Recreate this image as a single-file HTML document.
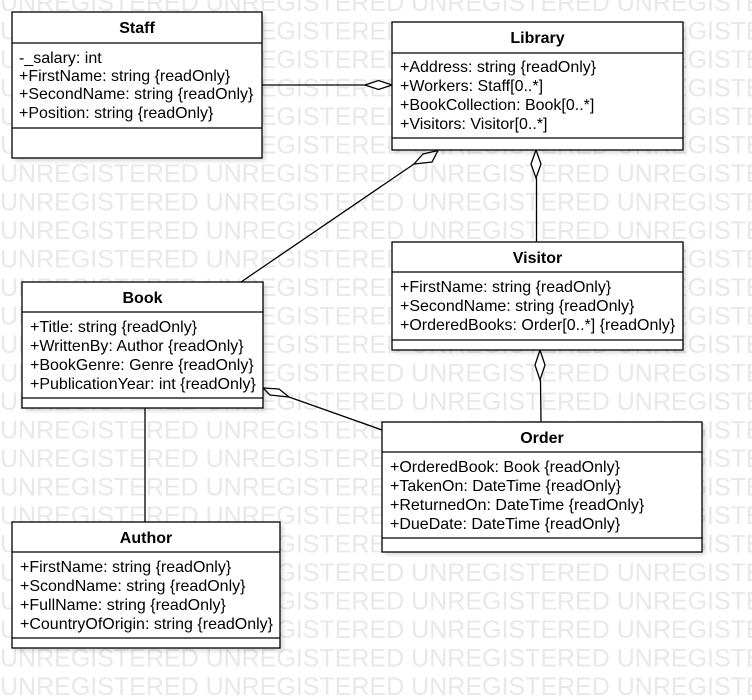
<!DOCTYPE html>
<html><head><meta charset="utf-8"><style>
html,body{margin:0;padding:0;background:#fff;}
svg{display:block}
</style></head><body>
<svg width="752" height="700" viewBox="0 0 752 700" xmlns="http://www.w3.org/2000/svg" font-family="Liberation Sans, sans-serif">
<defs>
<filter id="sh" x="-5%" y="-5%" width="115%" height="120%"><feGaussianBlur stdDeviation="2"/></filter>
</defs>
<g fill="#e8e8e8" font-size="25">
<text x="0" y="11">UNREGISTERED UNREGISTERED UNREGISTERED UNREGISTERED</text>
<text x="0" y="39.5">UNREGISTERED UNREGISTERED UNREGISTERED UNREGISTERED</text>
<text x="0" y="68">UNREGISTERED UNREGISTERED UNREGISTERED UNREGISTERED</text>
<text x="0" y="96.5">UNREGISTERED UNREGISTERED UNREGISTERED UNREGISTERED</text>
<text x="0" y="125">UNREGISTERED UNREGISTERED UNREGISTERED UNREGISTERED</text>
<text x="0" y="153.5">UNREGISTERED UNREGISTERED UNREGISTERED UNREGISTERED</text>
<text x="0" y="182">UNREGISTERED UNREGISTERED UNREGISTERED UNREGISTERED</text>
<text x="0" y="210.5">UNREGISTERED UNREGISTERED UNREGISTERED UNREGISTERED</text>
<text x="0" y="239">UNREGISTERED UNREGISTERED UNREGISTERED UNREGISTERED</text>
<text x="0" y="267.5">UNREGISTERED UNREGISTERED UNREGISTERED UNREGISTERED</text>
<text x="0" y="296">UNREGISTERED UNREGISTERED UNREGISTERED UNREGISTERED</text>
<text x="0" y="324.5">UNREGISTERED UNREGISTERED UNREGISTERED UNREGISTERED</text>
<text x="0" y="353">UNREGISTERED UNREGISTERED UNREGISTERED UNREGISTERED</text>
<text x="0" y="381.5">UNREGISTERED UNREGISTERED UNREGISTERED UNREGISTERED</text>
<text x="0" y="410">UNREGISTERED UNREGISTERED UNREGISTERED UNREGISTERED</text>
<text x="0" y="438.5">UNREGISTERED UNREGISTERED UNREGISTERED UNREGISTERED</text>
<text x="0" y="467">UNREGISTERED UNREGISTERED UNREGISTERED UNREGISTERED</text>
<text x="0" y="495.5">UNREGISTERED UNREGISTERED UNREGISTERED UNREGISTERED</text>
<text x="0" y="524">UNREGISTERED UNREGISTERED UNREGISTERED UNREGISTERED</text>
<text x="0" y="552.5">UNREGISTERED UNREGISTERED UNREGISTERED UNREGISTERED</text>
<text x="0" y="581">UNREGISTERED UNREGISTERED UNREGISTERED UNREGISTERED</text>
<text x="0" y="609.5">UNREGISTERED UNREGISTERED UNREGISTERED UNREGISTERED</text>
<text x="0" y="638">UNREGISTERED UNREGISTERED UNREGISTERED UNREGISTERED</text>
<text x="0" y="666.5">UNREGISTERED UNREGISTERED UNREGISTERED UNREGISTERED</text>
<text x="0" y="695">UNREGISTERED UNREGISTERED UNREGISTERED UNREGISTERED</text>
</g>

<g stroke="#000" stroke-width="1.3" fill="#fff">
<line x1="262" y1="85" x2="365" y2="85"/>
<path d="M392 85 L378.5 80.5 L365 85 L378.5 89.5 Z"/>
<line x1="414" y1="164" x2="241" y2="282"/>
<path d="M438 150.5 L423 154 L414 164 L432 162 Z"/>
<line x1="536.5" y1="178" x2="536.5" y2="242"/>
<path d="M536 150 L531 164 L536 178 L541 164 Z"/>
<line x1="289" y1="397" x2="382" y2="430"/>
<path d="M263 388 L270 395 L289 397 L279 389 Z"/>
<line x1="540.5" y1="380" x2="541" y2="422"/>
<path d="M540 350 L535 365 L540 380 L545 365 Z"/>
<line x1="145" y1="408" x2="145" y2="522"/>
</g>

<g fill="#000" opacity="0.15" filter="url(#sh)">
<rect x="15" y="15" width="250" height="146"/>
<rect x="395" y="25" width="291" height="128"/>
<rect x="395" y="245" width="291" height="108"/>
<rect x="25" y="285" width="241" height="126"/>
<rect x="385" y="425" width="320" height="130"/>
<rect x="15" y="525" width="268" height="126"/>
</g>

<g stroke="#000" stroke-width="1.3" fill="#fff">
<rect x="12" y="12" width="250" height="146"/>
<line x1="12" y1="43" x2="262" y2="43"/><line x1="12" y1="128" x2="262" y2="128"/>
<rect x="392" y="22" width="291" height="128"/>
<line x1="392" y1="53" x2="683" y2="53"/><line x1="392" y1="138" x2="683" y2="138"/>
<rect x="392" y="242" width="291" height="108"/>
<line x1="392" y1="272" x2="683" y2="272"/><line x1="392" y1="340" x2="683" y2="340"/>
<rect x="22" y="282" width="241" height="126"/>
<line x1="22" y1="312" x2="263" y2="312"/><line x1="22" y1="398" x2="263" y2="398"/>
<rect x="382" y="422" width="320" height="130"/>
<line x1="382" y1="452" x2="702" y2="452"/><line x1="382" y1="538" x2="702" y2="538"/>
<rect x="12" y="522" width="268" height="126"/>
<line x1="12" y1="552" x2="280" y2="552"/><line x1="12" y1="638" x2="280" y2="638"/>
</g>

<g fill="#000" font-size="16" font-weight="bold" text-anchor="middle">
<text x="137" y="33">Staff</text>
<text x="537.5" y="43">Library</text>
<text x="537.5" y="263">Visitor</text>
<text x="142.5" y="303">Book</text>
<text x="542" y="443">Order</text>
<text x="146" y="543">Author</text>
</g>
<g fill="#000" font-size="16">
<text x="19" y="63">-_salary: int</text>
<text x="19" y="81">+FirstName: string {readOnly}</text>
<text x="19" y="99">+SecondName: string {readOnly}</text>
<text x="19" y="118">+Position: string {readOnly}</text>

<text x="400" y="72">+Address: string {readOnly}</text>
<text x="400" y="91">+Workers: Staff[0..*]</text>
<text x="400" y="110">+BookCollection: Book[0..*]</text>
<text x="400" y="129">+Visitors: Visitor[0..*]</text>

<text x="400" y="292">+FirstName: string {readOnly}</text>
<text x="400" y="311">+SecondName: string {readOnly}</text>
<text x="400" y="330">+OrderedBooks: Order[0..*] {readOnly}</text>

<text x="30" y="332">+Title: string {readOnly}</text>
<text x="30" y="351">+WrittenBy: Author {readOnly}</text>
<text x="30" y="370">+BookGenre: Genre {readOnly}</text>
<text x="30" y="389">+PublicationYear: int {readOnly}</text>

<text x="390" y="472">+OrderedBook: Book {readOnly}</text>
<text x="390" y="491">+TakenOn: DateTime {readOnly}</text>
<text x="390" y="510">+ReturnedOn: DateTime {readOnly}</text>
<text x="390" y="529">+DueDate: DateTime {readOnly}</text>

<text x="20" y="572">+FirstName: string {readOnly}</text>
<text x="20" y="591">+ScondName: string {readOnly}</text>
<text x="20" y="610">+FullName: string {readOnly}</text>
<text x="20" y="629">+CountryOfOrigin: string {readOnly}</text>
</g>
</svg>
</body></html>
